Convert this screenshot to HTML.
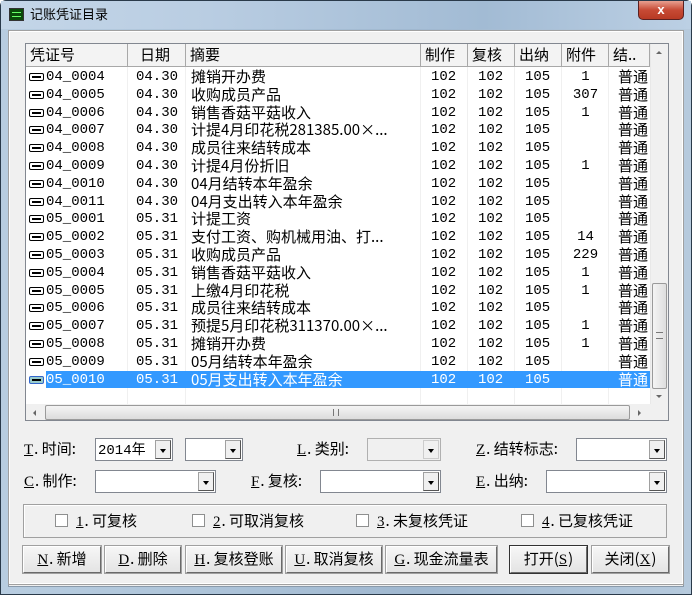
<!DOCTYPE html>
<html><head><meta charset="utf-8"><style>
*{box-sizing:border-box;margin:0;padding:0}
body{width:692px;height:595px;position:relative;overflow:hidden;background:#fff;font-family:"Liberation Sans","Noto Sans CJK SC",sans-serif;}
.a{position:absolute}
#frame{left:0;top:0;width:692px;height:595px;border:1px solid #2a3a4a;border-radius:6px 6px 0 0;background:linear-gradient(90deg,#b8cde0 0%,#a9c0d6 40%,#9fb7cf 60%,#b6cadd 100%);}
#client{left:8px;top:30px;width:676px;height:557px;background:#f0f0f0;border:1px solid #8a9aaa;}
#panel{left:9px;top:31px;width:674px;height:553px;border:1px solid #fff;outline:1px solid #a0a0a0;background:#f0f0f0}
.t{font-size:14px;color:#000;white-space:nowrap;font-family:"Liberation Sans","Noto Sans CJK SC",sans-serif;line-height:18px}
#list{left:25px;top:43px;width:644px;height:378px;border:1px solid #828790;background:#fff;overflow:hidden}
.hd{position:absolute;top:0;height:23px;background:#f3f3f3;border-right:1px solid #a8a8a8;border-bottom:1px solid #a8a8a8;font-size:15px;line-height:22px;font-family:"Noto Sans CJK SC",sans-serif;padding-left:4px;color:#000}
.row{position:absolute;left:0;width:624px;height:18px}
.c{position:absolute;top:0;height:18px;line-height:18px;white-space:nowrap;overflow:hidden}
.m{font-family:"Liberation Mono",monospace;font-size:14px}
.z{font-family:"Noto Sans CJK SC",sans-serif;font-size:15px}
.sel{background:#3399ff;color:#fff}
.vl{position:absolute;top:23px;width:1px;height:337px;background:#f0f0f0}
.ico{position:absolute;left:3px;top:5px;width:15px;height:8px;border:1px solid #000;border-radius:2px;background:#fff}
.ico:after{content:"";position:absolute;left:2px;top:2px;width:9px;height:2px;background:#000}
.combo{position:absolute;height:23px;border:1px solid #828790;background:#fff}
.combo .ar{position:absolute;right:1px;top:1px;width:16px;height:19px;background:#f0f0f0;border:1px solid #a0a0a0;border-right-color:#555;border-bottom-color:#555}
.combo .ar:after{content:"";position:absolute;left:4px;top:8px;border-left:3.5px solid transparent;border-right:3.5px solid transparent;border-top:4px solid #000}
.lbl{position:absolute;font-size:15px;font-family:"Noto Sans CJK SC",sans-serif;line-height:20px;white-space:nowrap}
.u{text-decoration:underline;font-family:"Liberation Serif",serif;margin-right:1px}
.btn{position:absolute;top:546px;height:27px;background:linear-gradient(#f6f6f6,#e4e4e4);border:1px solid #fff;border-right-color:#6a6a6a;border-bottom-color:#6a6a6a;outline:1px solid #a0a0a0;font-size:15px;font-family:"Noto Sans CJK SC",sans-serif;line-height:24px;text-align:center}
.cb{display:inline-block;width:13px;height:13px;border:1px solid #8e8f8f;background:#fff;vertical-align:-1px;margin-right:8px}
</style></head><body>
<div id="frame" class="a"></div>
<div class="a" style="left:1px;top:1px;width:690px;height:28px;background:linear-gradient(90deg,#c4d6e8 0%,#b9cde2 30%,#a2bbd4 70%,#bcd0e4 100%)"></div>
<div class="a" style="left:9px;top:8px;width:15px;height:13px;border:1px solid #333;background:#0a4a0a"><div style="position:absolute;left:2px;top:3px;width:9px;height:5px;border-bottom:1px solid #6f6;border-top:1px solid #6f6;"></div></div>
<div class="a t" style="left:30px;top:5px;font-size:13px;font-family:'Noto Sans CJK SC',sans-serif">记账凭证目录</div>
<div class="a" style="left:638px;top:1px;width:46px;height:19px;border:1px solid #5a2020;border-top:none;border-radius:0 0 5px 5px;background:linear-gradient(#e8a090,#c74a35 50%,#b83a24);color:#fff;font-weight:bold;text-align:center;font-size:13px;line-height:17px">x</div>
<div id="client" class="a"></div>
<div id="panel" class="a"></div>

<div id="list" class="a">
<div class="hd" style="left:0;width:102px">凭证号</div>
<div class="hd" style="left:102px;width:58px;padding-left:12px">日期</div>
<div class="hd" style="left:160px;width:235px">摘要</div>
<div class="hd" style="left:395px;width:47px">制作</div>
<div class="hd" style="left:442px;width:47px">复核</div>
<div class="hd" style="left:489px;width:47px">出纳</div>
<div class="hd" style="left:536px;width:47px">附件</div>
<div class="hd" style="left:583px;width:41px">结..</div>
<div class="vl" style="left:101px"></div><div class="vl" style="left:159px"></div><div class="vl" style="left:394px"></div><div class="vl" style="left:441px"></div><div class="vl" style="left:488px"></div><div class="vl" style="left:535px"></div><div class="vl" style="left:582px"></div>
<div id="rows"></div>
<div class="a" style="left:624px;top:0;width:18px;height:360px;background:#f0f0f0;border-left:1px solid #e8e8e8"></div>
<div class="a" style="left:630px;top:7px;border-left:3px solid transparent;border-right:3px solid transparent;border-bottom:3px solid #666"></div>
<div class="a" style="left:626px;top:239px;width:15px;height:106px;border:1px solid #9a9a9a;border-radius:2px;background:linear-gradient(90deg,#f4f4f4,#dedede)"></div>
<div class="a" style="left:630px;top:288px;width:7px;height:7px;border-top:1px solid #777;border-bottom:1px solid #777"></div>
<div class="a" style="left:630px;top:351px;border-left:3px solid transparent;border-right:3px solid transparent;border-top:3px solid #666"></div>
<div class="a" style="left:0;top:360px;width:642px;height:17px;background:#f0f0f0"></div>
<div class="a" style="left:7px;top:366px;border-top:3px solid transparent;border-bottom:3px solid transparent;border-right:3px solid #666"></div>
<div class="a" style="left:19px;top:361px;width:585px;height:15px;border:1px solid #9a9a9a;border-radius:2px;background:linear-gradient(#f4f4f4,#dcdcdc)"></div>
<div class="a" style="left:307px;top:365px;width:6px;height:7px;border-left:1px solid #777;border-right:1px solid #777"></div>
<div class="a" style="left:612px;top:366px;border-top:3px solid transparent;border-bottom:3px solid transparent;border-left:3px solid #666"></div>
</div>

<div class="lbl" style="left:24px;top:439px"><span class="u">T</span>. 时间:</div>
<div class="combo" style="left:95px;top:438px;width:78px"><div class="t" style="position:absolute;left:2px;top:1px;font-family:'Liberation Mono',monospace;font-size:14px">2014<span style="font-family:'Noto Sans CJK SC';font-size:14px">年</span></div><div class="ar"></div></div>
<div class="combo" style="left:185px;top:438px;width:58px"><div class="ar"></div></div>
<div class="lbl" style="left:297px;top:439px"><span class="u">L</span>. 类别:</div>
<div class="combo" style="left:367px;top:438px;width:74px;background:#f0f0f0;border-color:#b0b0b0"><div class="ar" style="border-color:#ccc"></div></div>
<div class="lbl" style="left:476px;top:439px"><span class="u">Z</span>. 结转标志:</div>
<div class="combo" style="left:576px;top:438px;width:91px"><div class="ar"></div></div>

<div class="lbl" style="left:24px;top:471px"><span class="u">C</span>. 制作:</div>
<div class="combo" style="left:95px;top:470px;width:121px"><div class="ar"></div></div>
<div class="lbl" style="left:251px;top:471px"><span class="u">F</span>. 复核:</div>
<div class="combo" style="left:320px;top:470px;width:121px"><div class="ar"></div></div>
<div class="lbl" style="left:476px;top:471px"><span class="u">E</span>. 出纳:</div>
<div class="combo" style="left:546px;top:470px;width:121px"><div class="ar"></div></div>

<div class="a" style="left:23px;top:504px;width:644px;height:34px;border:1px solid #a0a0a0;box-shadow:inset 1px 1px 0 #fff"></div>
<div class="lbl" style="left:55px;top:511px"><span class="cb"></span><span class="u">1</span>. 可复核</div>
<div class="lbl" style="left:192px;top:511px"><span class="cb"></span><span class="u">2</span>. 可取消复核</div>
<div class="lbl" style="left:356px;top:511px"><span class="cb"></span><span class="u">3</span>. 未复核凭证</div>
<div class="lbl" style="left:521px;top:511px"><span class="cb"></span><span class="u">4</span>. 已复核凭证</div>

<div class="btn" style="left:23px;width:78px"><span class="u">N</span>. 新增</div>
<div class="btn" style="left:105px;width:76px"><span class="u">D</span>. 删除</div>
<div class="btn" style="left:186px;width:96px"><span class="u">H</span>. 复核登账</div>
<div class="btn" style="left:286px;width:96px"><span class="u">U</span>. 取消复核</div>
<div class="btn" style="left:386px;width:111px"><span class="u">G</span>. 现金流量表</div>
<div class="btn" style="left:510px;width:77px;outline:1px solid #333">打开(<span class="u">S</span>)</div>
<div class="btn" style="left:592px;width:77px">关闭(<span class="u">X</span>)</div>

<script>
var d=[["04_0004","04.30","摊销开办费","1"],["04_0005","04.30","收购成员产品","307"],["04_0006","04.30","销售香菇平菇收入","1"],["04_0007","04.30","计提4月印花税281385.00×...",""],["04_0008","04.30","成员往来结转成本",""],["04_0009","04.30","计提4月份折旧","1"],["04_0010","04.30","04月结转本年盈余",""],["04_0011","04.30","04月支出转入本年盈余",""],["05_0001","05.31","计提工资",""],["05_0002","05.31","支付工资、购机械用油、打...","14"],["05_0003","05.31","收购成员产品","229"],["05_0004","05.31","销售香菇平菇收入","1"],["05_0005","05.31","上缴4月印花税","1"],["05_0006","05.31","成员往来结转成本",""],["05_0007","05.31","预提5月印花税311370.00×...","1"],["05_0008","05.31","摊销开办费","1"],["05_0009","05.31","05月结转本年盈余",""],["05_0010","05.31","05月支出转入本年盈余",""]];
var h="";
d.forEach(function(r,i){var top=(24+i*17.8).toFixed(1);var s=i==17;
h+='<div class="row" style="top:'+top+'px">'+(s?'<div class="sel" style="position:absolute;left:20px;top:0;width:604px;height:17px"></div>':'')+
'<div class="ico"'+(s?' style="background:#9cc;border-color:#36c"':'')+'></div>'+
'<div class="c m" style="left:20px;'+(s?'color:#fff':'')+'">'+r[0]+'</div>'+
'<div class="c m" style="left:110px;'+(s?'color:#fff':'')+'">'+r[1]+'</div>'+
'<div class="c z" style="left:165px;'+(s?'color:#fff':'')+'">'+r[2]+'</div>'+
'<div class="c m" style="left:405px;'+(s?'color:#fff':'')+'">102</div>'+
'<div class="c m" style="left:452px;'+(s?'color:#fff':'')+'">102</div>'+
'<div class="c m" style="left:499px;'+(s?'color:#fff':'')+'">105</div>'+
'<div class="c m" style="left:536px;width:47px;text-align:center">'+r[3]+'</div>'+
'<div class="c z" style="left:592px;'+(s?'color:#fff':'')+'">普通</div></div>';});
document.getElementById("rows").innerHTML=h;
</script>
</body></html>
